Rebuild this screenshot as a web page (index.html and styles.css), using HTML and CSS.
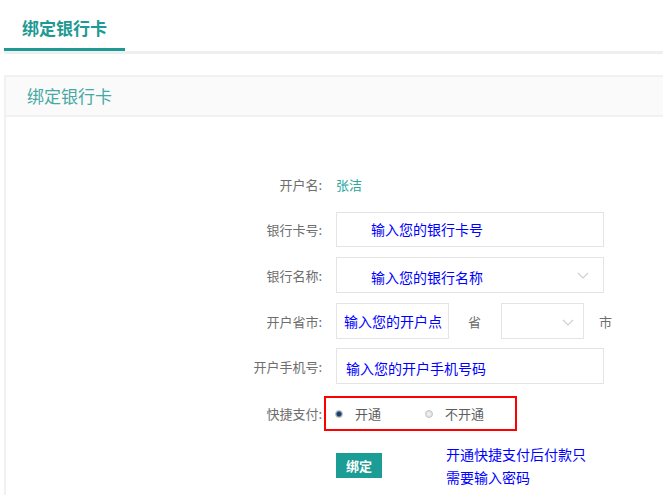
FILE: index.html
```html
<!DOCTYPE html>
<html lang="zh-CN">
<head>
<meta charset="utf-8">
<title>绑定银行卡</title>
<link rel="stylesheet" href="styles.css">
</head>
<body>
<div class="page">
  <div class="tabs">
    <div class="tab active">绑定银行卡</div>
  </div>
  <div class="card">
    <div class="card-head">绑定银行卡</div>
    <div class="card-body">
      <div class="row row-name">
        <div class="label">开户名:</div>
        <div class="value">张洁</div>
      </div>
      <div class="row row-card">
        <div class="label">银行卡号:</div>
        <div class="field field-wide pad-36">输入您的银行卡号</div>
      </div>
      <div class="row row-bank">
        <div class="label">银行名称:</div>
        <div class="field field-wide select pad-36 text-low">输入您的银行名称
          <svg class="chev" width="12" height="7" viewBox="0 0 12 7"><polyline points="1,1 6,6 11,1" fill="none" stroke="#cfcfcf" stroke-width="1.2"/></svg>
        </div>
      </div>
      <div class="row row-city">
        <div class="label">开户省市:</div>
        <div class="field field-small pad-8">输入您的开户点</div>
        <span class="unit unit-prov">省</span>
        <div class="field field-city select">
          <svg class="chev chev-small" width="12" height="7" viewBox="0 0 12 7"><polyline points="1,1 6,6 11,1" fill="none" stroke="#cfcfcf" stroke-width="1.2"/></svg>
        </div>
        <span class="unit unit-city">市</span>
      </div>
      <div class="row row-phone">
        <div class="label">开户手机号:</div>
        <div class="field field-wide pad-10 text-low">输入您的开户手机号码</div>
      </div>
      <div class="row row-pay">
        <div class="label">快捷支付:</div>
        <div class="radio-box">
          <span class="radio checked"></span><span class="radio-text">开通</span>
          <span class="radio radio-2"></span><span class="radio-text">不开通</span>
        </div>
      </div>
      <div class="row row-submit">
        <button class="btn">绑定</button>
        <div class="note">开通快捷支付后付款只<br>需要输入密码</div>
      </div>
    </div>
  </div>
</div>
</body>
</html>
```
FILE: styles.css
```css
html, body {
  margin: 0;
  padding: 0;
  overflow: hidden;
  background: #fff;
}
body {
  font-family: "Noto Sans CJK SC", "Noto Sans", "Liberation Sans", sans-serif;
  color: #666;
}
.page {
  padding-left: 4px;
}
.tabs {
  display: flex;
  border-bottom: 3px solid #efefef;
  height: 51px;
}
.tab {
  padding: 4px 18px 0 18px;
  line-height: 47px;
  font-size: 17px;
  font-weight: bold;
  color: #1c9a93;
  width: 85px;
  white-space: nowrap;
}
.tab.active {
  border-bottom: 3px solid #1c9a93;
}
.card {
  margin-top: 21px;
  border: 2px solid #f1f1f1;
  border-right: none;
  border-bottom: none;
  height: 418px;
}
.card-head {
  height: 38px;
  line-height: 38px;
  background: #fafafa;
  border-bottom: 2px solid #f1f1f1;
  padding-left: 21px;
  font-size: 17px;
  color: #46a9a4;
}
.card-body {
  padding: 49px 0 0 196px;
}
.row {
  display: flex;
  align-items: center;
  height: 36px;
  margin-bottom: 10px;
}
.label {
  width: 120px;
  margin-right: 14px;
  text-align: right;
  font-size: 13px;
  color: #6e6e6e;
  white-space: nowrap;
}
.value {
  font-size: 13px;
  color: #2ea59f;
}
.field {
  box-sizing: border-box;
  height: 36px;
  border: 1px solid #e4e4e4;
  font-size: 14px;
  line-height: 34px;
  color: #0000ff;
  white-space: nowrap;
  position: relative;
}
.row-card { height: 35px; }
.row-card .field { height: 35px; line-height: 33px; }
.row-city { margin-bottom: 9px; }
.field-wide { width: 268px; }
.field-small { width: 113px; }
.field-city { width: 83px; }
.pad-36 { padding-left: 34px; }
.pad-8 { padding-left: 7px; }
.pad-10 { padding-left: 9px; }
.text-low { line-height: 39px; }
.chev {
  position: absolute;
  right: 14px;
  top: 14px;
}
.chev-small {
  right: 9px;
  top: 15px;
}
.unit {
  font-size: 13px;
  color: #6e6e6e;
}
.unit-prov { margin: 0 20px 0 19px; }
.unit-city { margin-left: 15px; }
.row-phone { margin-bottom: 12px; }
.row-pay { height: 35px; margin-bottom: 12px; }
.row-pay .label { margin-right: 2px; }
.radio-box {
  box-sizing: border-box;
  width: 193px;
  height: 35px;
  border: 2px solid #ff0000;
  display: flex;
  align-items: center;
  padding-left: 9px;
}
.radio {
  box-sizing: border-box;
  width: 8px;
  height: 8px;
  border-radius: 50%;
  border: 1px solid #c4c4c4;
  background: radial-gradient(circle, #f4f4f4 0, #d9d9d9 100%);
}
.radio.checked {
  background: radial-gradient(circle, #1a3f73 0, #1a3f73 45%, #9aa7b5 75%, #d6d6d6 100%);
  border-color: #b8b8b8;
}
.radio-2 { margin-left: 44px; }
.radio-text {
  margin-left: 12px;
  font-size: 13px;
  color: #5e5e5e;
}
.row-submit {
  align-items: flex-start;
  height: auto;
  padding-left: 134px;
}
.btn {
  margin-top: 10px;
  width: 46px;
  height: 25px;
  padding: 0;
  border: none;
  background: #1b9c95;
  color: #fff;
  font-family: "Noto Sans CJK SC", "Noto Sans", sans-serif;
  font-size: 13px;
  font-weight: bold;
}
.note {
  margin-left: 64px;
  font-size: 14px;
  line-height: 23px;
  color: #0000ff;
}
```
